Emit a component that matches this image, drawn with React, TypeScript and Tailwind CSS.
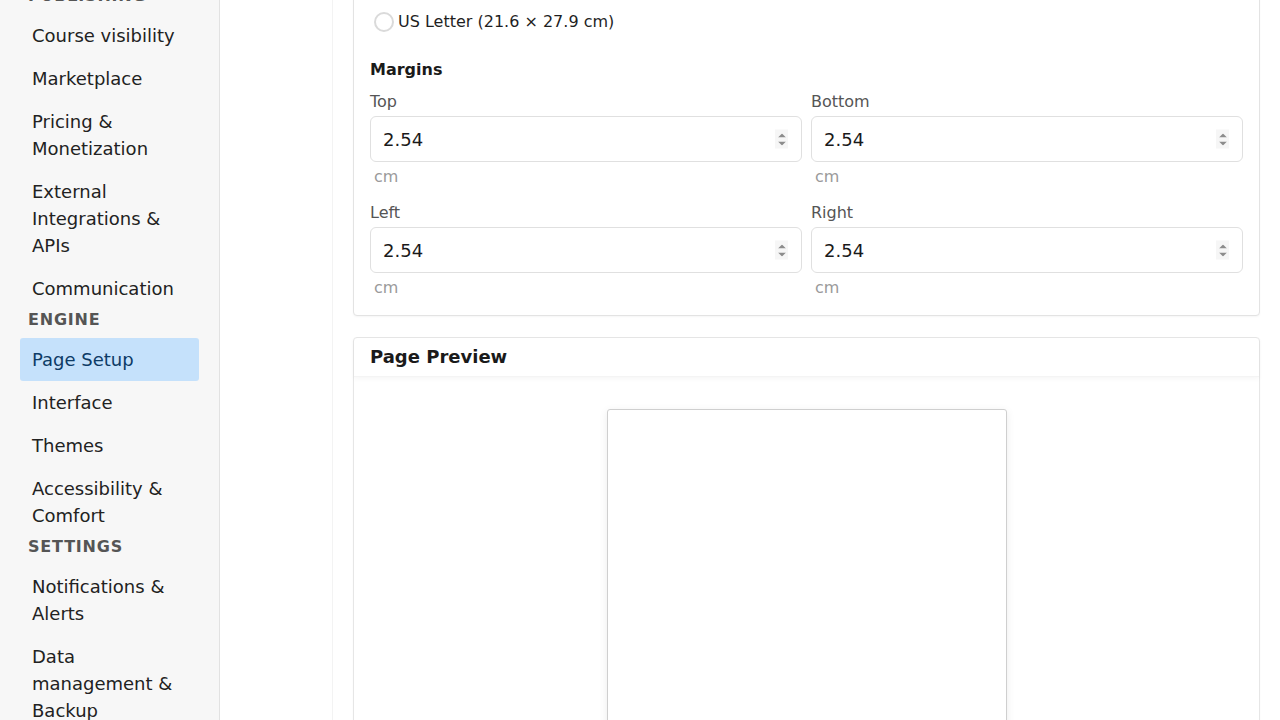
import React from "react";

type NavEntry = { label: string; active?: boolean };
type NavSection = { title: string; items: NavEntry[] };

const sections: NavSection[] = [
    {
        title: "Publishing",
        items: [
            { label: "Course visibility" },
            { label: "Marketplace" },
            { label: "Pricing & Monetization" },
            { label: "External Integrations & APIs" },
            { label: "Communication" },
        ],
    },
    {
        title: "Engine",
        items: [
            { label: "Page Setup", active: true },
            { label: "Interface" },
            { label: "Themes" },
            { label: "Accessibility & Comfort" },
        ],
    },
    {
        title: "Settings",
        items: [
            { label: "Notifications & Alerts" },
            { label: "Data management & Backup" },
            { label: "Advanced" },
        ],
    },
];

const margins = ["Top", "Bottom", "Left", "Right"];

function Sidebar() {
    return (
        <aside className="w-[220px] shrink-0 h-screen overflow-hidden bg-[#f7f7f7] border-r border-[#e2e2e2]">
            <div className="-mt-[14px] px-5">
                {sections.map((section) => (
                    <div key={section.title}>
                        <div className="px-2 mb-2 text-base leading-5 font-bold uppercase tracking-[0.05em] text-[#555]">
                            {section.title}
                        </div>
                        {section.items.map((item) => (
                            <a
                                key={item.label}
                                href="#"
                                className={
                                    item.active
                                        ? "block px-3 py-2 rounded-[3px] text-lg leading-[27px] bg-[#c5e1fb] text-[#0d3b66]"
                                        : "block px-3 py-2 rounded-[3px] text-lg leading-[27px] text-[#222]"
                                }
                            >
                                {item.label}
                            </a>
                        ))}
                    </div>
                ))}
            </div>
        </aside>
    );
}

function Radio({ label }: { label: string }) {
    return (
        <label className="flex items-center gap-1 h-8 text-base leading-6 text-[#1f1f1f]">
            <span className="ml-1 w-5 h-5 rounded-full border-2 border-[#dadada] bg-white" />
            {label}
        </label>
    );
}

function Spinner() {
    return (
        <span className="absolute right-[14px] top-1/2 -translate-y-1/2 flex flex-col items-center justify-center gap-[4px] w-[13px] h-[19px] bg-[#f6f6f6] pointer-events-none">
            <svg width="8" height="4" viewBox="0 0 8 4">
                <path d="M4 0L8 4H0z" fill="#8c8c8c" />
            </svg>
            <svg width="8" height="4" viewBox="0 0 8 4">
                <path d="M0 0h8L4 4z" fill="#8c8c8c" />
            </svg>
        </span>
    );
}

function MarginField({ label }: { label: string }) {
    return (
        <div>
            <div className="mb-[2px] text-base leading-6 text-[#555]">{label}</div>
            <div className="relative">
                <input
                    type="text"
                    inputMode="decimal"
                    defaultValue="2.54"
                    className="block w-full h-[46px] pl-3 pr-8 rounded-md border border-[#e0e0e0] bg-white text-lg text-[#1a1a1a] outline-none"
                />
                <Spinner />
            </div>
            <div className="mt-[3px] pl-1 text-base leading-6 text-[#9a9a9a]">cm</div>
        </div>
    );
}

export default function App() {
    return (
        <div className="flex h-screen overflow-hidden bg-white font-['DejaVu_Sans',sans-serif]">
            <Sidebar />
            <div className="w-[113px] shrink-0 border-r border-[#f3f3f3]" />
            <main className="flex-1 px-5 overflow-hidden">
                <div className="-mt-[75px]">
                    <section className="rounded border border-[#e3e3e3] bg-white px-4 pt-4 pb-[15px] shadow-[0_1px_2px_rgba(0,0,0,0.04)]">
                        <div className="mb-2 text-base leading-6 font-bold text-[#1a1a1a]">Paper size</div>
                        <Radio label="A4 (21 × 29.7 cm)" />
                        <Radio label="US Letter (21.6 × 27.9 cm)" />

                        <div className="mt-5 mb-2 text-base leading-6 font-bold text-[#1a1a1a]">Margins</div>
                        <div className="grid grid-cols-2 gap-x-[9px] gap-y-3">
                            {margins.map((m) => (
                                <MarginField key={m} label={m} />
                            ))}
                        </div>
                    </section>

                    <section className="mt-[21px] rounded border border-[#e6e6e6] bg-white shadow-[0_1px_2px_rgba(0,0,0,0.04)]">
                        <div className="relative px-4 pt-[5px] pb-1.5 text-lg leading-[27px] font-bold text-[#1a1a1a] shadow-[0_2px_5px_rgba(0,0,0,0.04)] border-b border-[#f4f4f4]">
                            Page Preview
                        </div>
                        <div className="flex justify-center pt-8 pb-8">
                            <div className="w-[400px] h-[566px] rounded-[3px] border border-[#cfcfcf] bg-white shadow-[0_2px_8px_rgba(0,0,0,0.08)]" />
                        </div>
                    </section>
                </div>
            </main>
        </div>
    );
}
